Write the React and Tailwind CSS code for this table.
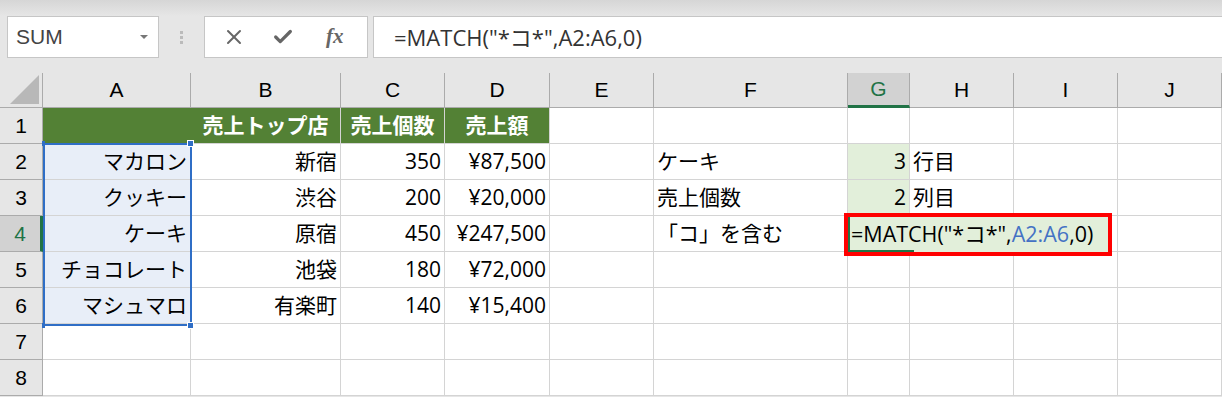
import { X, Check } from 'lucide-react'

const cols = ['A', 'B', 'C', 'D', 'E', 'F', 'G', 'H', 'I', 'J']
const font = { fontFamily: '"Open Sans", "Noto Sans CJK JP", sans-serif' }
const latin = { fontFamily: '"Liberation Sans", sans-serif' }

const rows = [
  ['', '売上トップ店', '売上個数', '売上額', '', '', '', '', '', ''],
  ['マカロン', '新宿', '350', '¥87,500', '', 'ケーキ', '3', '行目', '', ''],
  ['クッキー', '渋谷', '200', '¥20,000', '', '売上個数', '2', '列目', '', ''],
  ['ケーキ', '原宿', '450', '¥247,500', '', '「コ」を含む', '', '', '', ''],
  ['チョコレート', '池袋', '180', '¥72,000', '', '', '', '', '', ''],
  ['マシュマロ', '有楽町', '140', '¥15,400', '', '', '', '', '', ''],
  ['', '', '', '', '', '', '', '', '', ''],
  ['', '', '', '', '', '', '', '', '', ''],
]

function cellClass(r, c) {
  let cls = 'border-r border-b border-[#d4d4d4] flex items-center text-[21px] text-black whitespace-nowrap overflow-visible '
  if (r === 0 && c <= 3) {
    cls += 'bg-[#538135] text-white font-bold justify-center '
    if (c === 0) cls += 'border-r-[#538135] '
  } else if (c === 0 && r >= 1 && r <= 5) {
    cls += 'bg-[#e8eef8] justify-end pr-[3px] '
  } else if (c === 6 && r >= 1 && r <= 3) {
    cls += 'bg-[#e2efda] justify-end pr-[3px] '
  } else if (c === 5 || c === 7) {
    cls += 'justify-start pl-[3px] '
  } else {
    cls += 'justify-end pr-[3px] '
  }
  return cls
}

export default function App() {
  return (
    <div className="w-[1222px] h-[397px] bg-[#e6e6e6] overflow-hidden relative" style={font}>
      {/* formula bar */}
      <div className="h-[16px] bg-gradient-to-b from-[#d6d6d6] to-[#e6e6e6]" />
      <div className="flex items-stretch h-[42px]">
        <div className="ml-[7px] w-[152px] bg-white border border-[#c6c6c6] flex items-center justify-between pl-[8px] pr-[10px]">
          <span className="text-[21px] text-[#444]" style={latin}>SUM</span>
          <span className="w-0 h-0 border-l-[4px] border-r-[4px] border-t-[4px] border-l-transparent border-r-transparent border-t-[#777]" />
        </div>
        <div className="w-[45px] flex flex-col items-center justify-center gap-[2px]">
          <span className="w-[3px] h-[3px] bg-[#bbb]" />
          <span className="w-[3px] h-[3px] bg-[#bbb]" />
          <span className="w-[3px] h-[3px] bg-[#bbb]" />
        </div>
        <div className="w-[164px] bg-white border border-[#c6c6c6] flex items-center pl-[17px] gap-[26px] text-[#666]">
          <X size={24} strokeWidth={2} />
          <Check size={22} strokeWidth={3.5} className="text-[#666]" />
          <span className="text-[21px] italic font-bold text-[#666] ml-[6px]" style={{ fontFamily: '"Liberation Serif", serif' }}>fx</span>
        </div>
        <div className="ml-[5px] flex-1 bg-white border border-[#c6c6c6] border-r-0 flex items-center pl-[20px] text-[22px] text-[#333]">
          =MATCH("*コ*",A2:A6,0)
        </div>
      </div>
      <div className="h-[15px]" />

      {/* sheet grid */}
      <div className="relative grid grid-cols-[43px_148px_150px_104px_105px_104px_194px_62px_104px_104px_104px] grid-rows-[35px_repeat(8,36px)] bg-white">
        <div className="bg-[#e6e6e6] border-r border-b border-[#ababab] relative">
          <svg className="absolute right-[3px] bottom-[3px]" width="29" height="29"><polygon points="29,0 29,29 0,29" fill="#b8b8b8" /></svg>
        </div>
        {cols.map(c => (
          <div key={c} className={`flex items-center justify-center text-[21px] border-r border-b ${c === 'G' ? 'bg-[#d2d2d2] text-[#217346] border-r-[#ababab] border-b-[3px] border-b-[#217346]' : 'bg-[#e6e6e6] text-black border-[#ababab]'}`} style={latin}>
            {c}
          </div>
        ))}
        {rows.map((row, r) => [
          <div key={`h${r}`} className={`flex items-center justify-center text-[21px] border-b border-r ${r === 3 ? 'bg-[#d2d2d2] text-[#217346] border-b-[#ababab] border-r-[3px] border-r-[#217346]' : 'bg-[#e6e6e6] text-black border-[#ababab]'}`} style={latin}>
            {r + 1}
          </div>,
          ...row.map((v, c) => (
            <div key={`${r}-${c}`} className={cellClass(r, c)}>
              {v}
            </div>
          )),
        ])}

        {/* reference range A2:A6 */}
        <div className="absolute left-[43px] top-[70px] w-[149px] h-[183px] border-[2px] border-[#2f6ec6] pointer-events-none" />
        <div className="absolute left-[187px] top-[67px] w-[7px] h-[7px] bg-[#2f6ec6] border border-white" />
        <div className="absolute left-[187px] top-[249px] w-[7px] h-[7px] bg-[#2f6ec6] border border-white" />
        <div className="absolute left-[42px] top-[68px] w-[3px] h-[5px] bg-[#2f6ec6]" />
        <div className="absolute left-[42px] top-[250px] w-[3px] h-[5px] bg-[#2f6ec6]" />

        {/* editing cell G4 */}
        <div className="absolute left-[844px] top-[140px] w-[268px] h-[43px] border-[4px] border-[#ff0000] bg-[#e2efda] flex items-center">
          <div className="absolute left-0 top-0 bottom-0 w-[66px] border-l-[2px] border-b-[2px] border-[#217346]" />
          <span className="relative pl-[3px] text-[21.5px] text-black whitespace-nowrap">
            =MATCH("*コ*",<span className="text-[#4472c4]">A2:A6</span>,0)
          </span>
        </div>
      </div>
    </div>
  )
}
